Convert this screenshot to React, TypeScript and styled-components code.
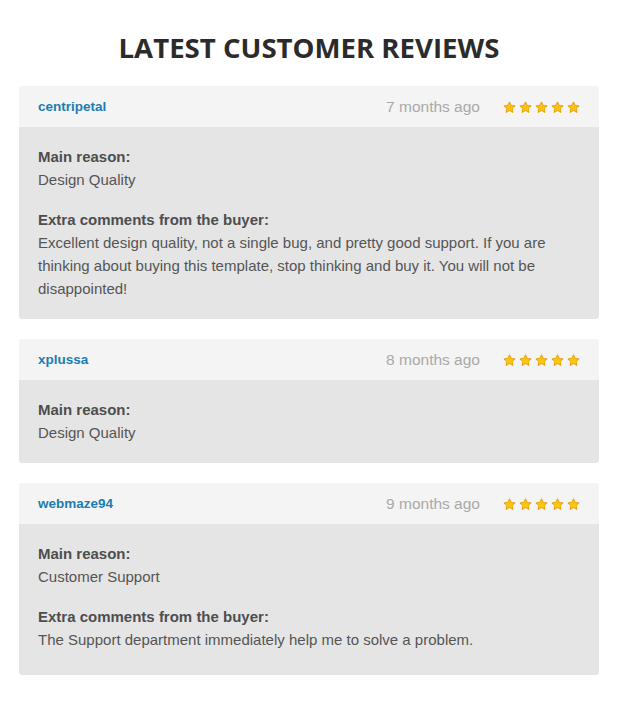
import styled, { createGlobalStyle } from "styled-components";

const GlobalStyle = createGlobalStyle`
  body {
    margin: 0;
    background: #ffffff;
    font-family: "Liberation Sans", Arial, sans-serif;
  }
`;

const Page = styled.section`
  width: 580px;
  padding: 30px 21px 40px 19px;
`;

const Title = styled.h2`
  margin: 0 0 22px;
  text-align: center;
  font-family: "Open Sans", sans-serif;
  font-weight: 700;
  font-size: 27.6px;
  line-height: 34px;
  color: #2b2b2b;
`;

const List = styled.div`
  display: flex;
  flex-direction: column;
  gap: 20px;
`;

const Body = styled.div`
  background: #e5e5e5;
  padding: 18px 19px 19px;
  font-size: 15px;
  line-height: 23px;
  color: #555555;
`;

const Card = styled.article`
  border-radius: 3px;
  overflow: hidden;

  &:last-child ${Body} {
    padding-bottom: 24px;
  }
`;

const Header = styled.div`
  display: flex;
  align-items: center;
  height: 41px;
  padding: 0 19px;
  background: #f4f4f4;
`;

const User = styled.span`
  flex: 1;
  font-size: 13.5px;
  font-weight: 700;
  color: #1b7db3;
`;

const Time = styled.span`
  font-size: 15.5px;
  color: #a9a9a9;
  margin-right: 23px;
`;

const Stars = styled.span`
  display: flex;
  gap: 3px;
  padding-top: 1px;
`;

const Block = styled.div`
  & + & {
    margin-top: 17px;
  }
`;

const Label = styled.div`
  font-weight: 700;
  color: #4e4e4e;
`;

const Star = () => (
  <svg width="13" height="13" viewBox="0 0 24 24">
    <path
      d="M12 1.5l3.1 6.6 7.2.9-5.3 5 1.4 7.2L12 17.6l-6.4 3.6L7 14l-5.3-5 7.2-.9z"
      fill="#fcc312"
      stroke="#e69a00"
      strokeWidth="1.6"
      strokeLinejoin="round"
    />
  </svg>
);

type Review = {
  user: string;
  when: string;
  reason: string;
  comment?: string;
};

const reviews: Review[] = [
  {
    user: "centripetal",
    when: "7 months ago",
    reason: "Design Quality",
    comment:
      "Excellent design quality, not a single bug, and pretty good support. If you are thinking about buying this template, stop thinking and buy it. You will not be disappointed!",
  },
  { user: "xplussa", when: "8 months ago", reason: "Design Quality" },
  {
    user: "webmaze94",
    when: "9 months ago",
    reason: "Customer Support",
    comment: "The Support department immediately help me to solve a problem.",
  },
];

const App = () => {
  return (
    <Page>
      <GlobalStyle />
      <Title>LATEST CUSTOMER REVIEWS</Title>
      <List>
        {reviews.map((r) => (
          <Card key={r.user}>
            <Header>
              <User>{r.user}</User>
              <Time>{r.when}</Time>
              <Stars>
                {[0, 1, 2, 3, 4].map((i) => (
                  <Star key={i} />
                ))}
              </Stars>
            </Header>
            <Body>
              <Block>
                <Label>Main reason:</Label>
                <div>{r.reason}</div>
              </Block>
              {r.comment && (
                <Block>
                  <Label>Extra comments from the buyer:</Label>
                  <div>{r.comment}</div>
                </Block>
              )}
            </Body>
          </Card>
        ))}
      </List>
    </Page>
  );
};

export default App;
